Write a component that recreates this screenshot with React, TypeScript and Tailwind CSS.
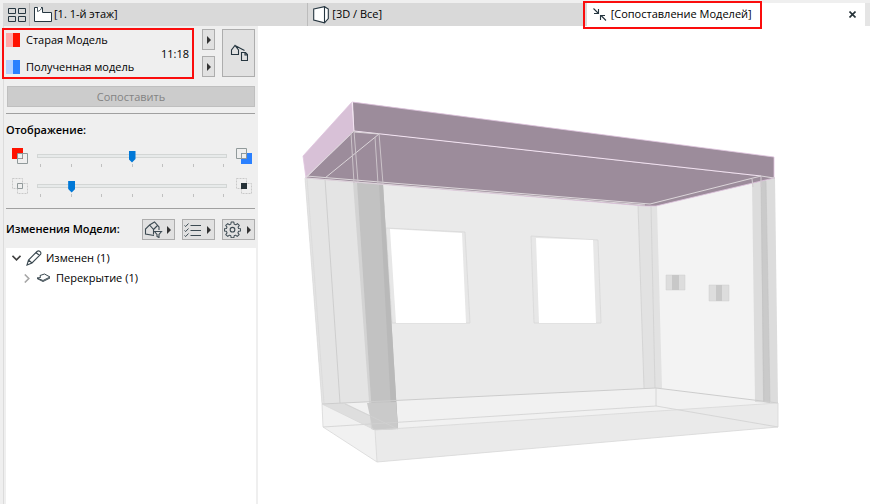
import { useState } from "react";
import type { ReactNode } from "react";

const TICKS = [0, 1, 2, 3, 4, 5, 6];

function GridIcon() {
  return (
    <svg width="18" height="14" viewBox="0 0 18 14" fill="none" stroke="#263640">
      <path d="M.5.5h7v5h-7zM10.5.5h7v5h-7zM.5 8.5h7v5h-7zM10.5 8.5h7v5h-7z" />
    </svg>
  );
}

function PlanIcon() {
  return (
    <svg width="18" height="15" viewBox="0 0 18 15" fill="#fff" stroke="#263640">
      <path d="M.5.5v14h17V5.500h-9V.5z" stroke="none" />
      <path d="M.5.5v14h17V5.500h-9V.5H7M.5.5H3" />
      <path d="M3.500 0v4.500C5.500 4 7.500 2.500 7.500.5" strokeWidth=".8" fill="none" />
    </svg>
  );
}

function CubeIcon() {
  return (
    <svg width="16" height="18" viewBox="0 0 16 18" fill="#fff" stroke="#263640" strokeWidth="1.100">
      <path d="M.7 3 11.500.7l3.800 2.300v9.500l-3.800 4.300L.7 14z" />
      <path d="M11.500.7v16" />
    </svg>
  );
}

function CompareIcon() {
  return (
    <svg width="14" height="14" viewBox="0 0 14 14" fill="none" stroke="#263640" strokeWidth="1.100">
      <path d="M.5.5l5 5M5.500 1v4.500H1M13 12.500l-5-5M7.500 12V7.500H12" />
    </svg>
  );
}

function HousesIcon() {
  return (
    <svg width="18" height="18" viewBox="0 0 18 18" fill="none" stroke="#263640" strokeWidth="1.100">
      <path d="M9 10.500H1.500V6L5 1.500 8.500 6v4.500M5 1.500 14.500 6.500" />
      <path d="M11.500 8.500h4l2 2v6h-6zM15 8.500v2.500h2.500" />
    </svg>
  );
}

function FilterHouseIcon() {
  return (
    <svg width="19" height="17" viewBox="0 0 19 17" fill="none" stroke="#3c4a52" strokeWidth="1.100">
      <path d="M10 14.500 1.500 13V8L5.500 4l4 4.500v5M5.500 4l5-3 4.500 5v3M9.500 8.500l4-4" />
      <path d="M10.500 10.500h7l-2.500 3v3l-2-1v-2z" />
    </svg>
  );
}

function ChecklistIcon() {
  return (
    <svg width="18" height="14" viewBox="0 0 18 14" fill="none" stroke="#3c4a52">
      <path d="M6.500 2.500H17M6.500 7.500H17M6.500 12.500H17M.5 2.500l1.200 1L4.500.5M.5 7.500l1.200 1 2.800-3M.5 12.500l1.200 1 2.800-3" />
    </svg>
  );
}

function GearIcon() {
  return (
    <svg width="17" height="17" viewBox="0 0 24 24" fill="none" stroke="#3c4a52" strokeWidth="1.500" strokeLinejoin="round">
      <path d="M10 1h4l.5 3 2.300 1 2.500-1.800 2.800 2.800L20.300 8.500l.7 2 3 .3v3.400l-3 .5-1 2.300 1.900 2.500-2.900 2.800-2.500-1.900-2 .9-.5 3h-4l-.5-3-2.100-.9L5 22.300 2 19.500 3.900 17 3 14.700l-3-.5v-3.400l3-.3.8-2L2 6l3-2.800L7.400 5l2.100-1z" transform="translate(.6 .6) scale(.95)" />
      <circle cx="12" cy="12.300" r="3.300" />
    </svg>
  );
}

function PencilIcon() {
  return (
    <svg width="16" height="16" viewBox="0 0 16 16" fill="none" stroke="#3c4a52" strokeWidth="1.100">
      <path d="M1 15l1.500-5L11 1.500q1.500-1.200 3 0t.5 3L6 13zM2.500 10l3.500 3M10 2.500l3.500 3" />
    </svg>
  );
}

function SlabIcon() {
  return (
    <svg width="15" height="10" viewBox="0 0 15 10" fill="none" stroke="#3c4a52">
      <path d="M1 5 4.500 4.500 4 2.500 8.500 1 14 4 7 7.500z" />
      <path d="M1 5.500 7 8.500 14 5" />
    </svg>
  );
}

function OldModelIcon() {
  return (
    <svg width="16" height="16" viewBox="0 0 16 16" fill="none">
      <path d="M0 0h11v11H0z" fill="#ff1100" />
      <path d="M6 6h4v4H6z" fill="#efefef" />
      <path d="M5.500 5.500h10v10h-10zM10.500 5.500v5h-5" stroke="#919a9b" />
    </svg>
  );
}

function NewModelIcon() {
  return (
    <svg width="16" height="16" viewBox="0 0 16 16" fill="none">
      <path d="M5 5h11v11H5z" fill="#2a80ff" />
      <path d="M6 6h4v4H6z" fill="#efefef" />
      <path d="M.5.5h10v10H.5zM5.500 10.500v-5h5" stroke="#919a9b" />
    </svg>
  );
}

function OverlapIcon({ solid = false }: { solid?: boolean }) {
  return (
    <svg width="16" height="16" viewBox="0 0 16 16" fill="none">
      <path d="M.5.5h10v10H.5zM5.500 5.500h10v10h-10z" stroke="#c9c9c9" strokeDasharray="2 1" />
      {solid ? <path d="M5 5h6v6H5z" fill="#263238" /> : <path d="M5.500 5.500h5v5h-5z" fill="#efefef" stroke="#919a9b" />}
    </svg>
  );
}

function Arrow() {
  return (
    <svg width="4" height="8" viewBox="0 0 4 8" fill="#333"><path d="M0 0l4 4-4 4z" /></svg>
  );
}

function ToolButton({ label, children }: { label: string; children: ReactNode }) {
  return (
    <button type="button" aria-label={label}
      className="flex h-[21px] w-[33px] items-center justify-between border border-[#adadad] bg-[#e1e1e1] pl-px pr-[3px]">
      {children}
      <Arrow />
    </button>
  );
}

function DisplaySlider({ label, initial, left, right }: { label: string; initial: number; left: ReactNode; right: ReactNode }) {
  const [value, setValue] = useState(initial);
  return (
    <div className="flex h-[30px] items-start pl-1.5 pr-1">
      {left}
      <div className="mx-[9px] flex-1">
        <input type="range" min={0} max={6} value={value} aria-label={label}
          onChange={(e) => setValue(Number(e.target.value))}
          className="block h-[15px] w-full appearance-none bg-transparent [&::-webkit-slider-runnable-track]:h-1 [&::-webkit-slider-runnable-track]:border [&::-webkit-slider-runnable-track]:border-[#d3d6d5] [&::-webkit-slider-runnable-track]:bg-[#e7eaea] [&::-webkit-slider-thumb]:-mt-1 [&::-webkit-slider-thumb]:h-3 [&::-webkit-slider-thumb]:w-[7px] [&::-webkit-slider-thumb]:appearance-none [&::-webkit-slider-thumb]:bg-[#0078d7] [&::-webkit-slider-thumb]:[clip-path:polygon(0_0,100%_0,100%_70%,50%_100%,0_70%)]" />
        <div className="flex justify-between px-[3px] pt-px">
          {TICKS.map((t) => <span key={t} className="h-[3px] w-px bg-[#c0c0c0]" />)}
        </div>
      </div>
      {right}
    </div>
  );
}

function SidePanel() {
  return (
    <aside className="flex w-[255px] shrink-0 flex-col border-l border-[#dcdcdc] bg-[#efefef] px-0.5">
      <div className="flex gap-[7px] pt-[3px] pr-px">
        <div className="relative flex-1">
          <div className="flex h-12 items-center">
            <div className="flex-1 space-y-[7px] pt-px">
              <div className="flex h-5 items-center gap-1.5">
                <span className="h-[14px] w-[14px] border-l-[7px] border-[#ffaaaa] bg-[#ff1100]" />
                Старая Модель
              </div>
              <div className="flex h-5 items-center gap-1.5">
                <span className="h-[14px] w-[14px] border-l-[7px] border-[#b3d1ff] bg-[#2a80ff]" />
                Полученная модель
              </div>
            </div>
            <span className="pr-1.5 pt-0.5">11:18</span>
          </div>
          <div className="pointer-events-none absolute -top-px right-px -bottom-0.5 -left-1 border-2 border-[#fb0d0d]" />
        </div>
        <div className="flex flex-col justify-between">
          <button type="button" aria-label="Старая Модель" className="flex h-[21px] w-[13px] items-center justify-center border border-[#adadad] bg-[#e1e1e1]"><Arrow /></button>
          <button type="button" aria-label="Полученная модель" className="flex h-[21px] w-[13px] items-center justify-center border border-[#adadad] bg-[#e1e1e1]"><Arrow /></button>
        </div>
        <button type="button" aria-label="Модели" className="flex h-12 w-[33px] items-center justify-center border border-[#adadad] bg-[#e1e1e1]"><HousesIcon /></button>
      </div>

      <button type="button" disabled className="mx-px mt-[9px] h-[21px] border border-[#bfbfbf] bg-[#cccccc] pt-px text-[#838383]">Сопоставить</button>

      <div className="mt-1.5 mr-px border-t border-[#a0a0a0]" />
      <h2 className="mt-2 h-4 leading-4 font-semibold">Отображение:</h2>

      <div className="mt-[10px]">
        <DisplaySlider label="Старая и полученная модели" initial={3} left={<OldModelIcon />} right={<NewModelIcon />} />
        <DisplaySlider label="Общие элементы" initial={1} left={<OverlapIcon />} right={<OverlapIcon solid />} />
      </div>

      <div className="mr-px border-t border-[#a0a0a0]" />
      <div className="mt-[10px] mr-px flex h-[21px] items-center gap-[7px]">
        <h2 className="flex-1 font-semibold whitespace-nowrap">Изменения Модели:</h2>
        <ToolButton label="Фильтр"><FilterHouseIcon /></ToolButton>
        <ToolButton label="Список"><ChecklistIcon /></ToolButton>
        <ToolButton label="Настройки"><GearIcon /></ToolButton>
      </div>

      <ul className="mt-2 flex-1 bg-white leading-5">
        <li>
          <div className="flex h-5 items-center pl-1.5">
            <svg width="9" height="6" viewBox="0 0 9 6" fill="none" stroke="#404040" strokeWidth="1.600"><path d="M.5.800l4 4 4-4" /></svg>
            <span className="mr-1 ml-[5px]"><PencilIcon /></span>
            Изменен (1)
          </div>
          <ul>
            <li className="flex h-5 items-center pl-[18px]">
              <svg width="6" height="9" viewBox="0 0 6 9" fill="none" stroke="#a6a6a6" strokeWidth="1.600"><path d="M.800.5l4 4-4 4" /></svg>
              <span className="mr-[5px] ml-1.5"><SlabIcon /></span>
              Перекрытие (1)
            </li>
          </ul>
        </li>
      </ul>
    </aside>
  );
}

function ModelView() {
  return (
    <svg className="h-full w-full" viewBox="258 26 612 478" preserveAspectRatio="xMinYMin meet" role="img" aria-label="3D">
      {/* back and side walls */}
      <path d="M305 177 656 205 658 389 322 404z" fill="#eaeaea" />
      <path d="M305 177 354 181 373 430 322 404z" fill="#e4e4e4" />
      <path d="M656 205 760 181 768 403 656 388z" fill="#f3f3f3" />
      {/* windows */}
      <g stroke="#d8d8d8" strokeWidth=".8">
        <path d="M386 228 465 232 470 323 392 323z" fill="#e7e7e7" />
        <path d="M531 236 598 240 601 323 534 323z" fill="#e7e7e7" />
      </g>
      <path d="M390 229 462 233 466 323 396 323z" fill="#fff" />
      <path d="M536 238 593 240 596 323 539 323z" fill="#fff" />
      {/* base */}
      <path d="M322 404 656 388 778 403 778 427 377 462 323 427z" fill="#f1f1f1" />
      <path d="M322 404 345 403 398 429 375 430z" fill="#dedede" />
      <path d="M375 430 778 403 778 427 377 462z" fill="#eaeaea" />
      {/* columns */}
      <path d="M638 205 657 205 662 388 644 388z" fill="#e2e2e2" />
      <path d="M651 205 655 388M638 205l6 183" stroke="#d0d0d0" strokeWidth=".8" fill="none" />
      <path d="M752 180 775 177 778 403 755 402z" fill="#dcdcdc" />
      <path d="M761 181 766 181 770 403 763 402z" fill="#cacaca" />
      <path d="M761 181l3 221M766 181l4 221" stroke="#c2c2c2" strokeWidth=".6" />
      <path d="M353 182 358 182 375 430 371 429z" fill="#d3d3d3" />
      <path d="M357 182 383 184 398 429 373 430z" fill="#c2c2c2" />
      <path d="M379 184 383 184 398 429 392 429z" fill="#b9b9b9" />
      <path d="M367 403 396 402 398 429 373 430z" fill="#cacaca" />
      <path d="M305 178l17 226M307 178l17 225" stroke="#d8d8d8" strokeWidth=".7" />
      <path d="M325 179l15 224" stroke="#cecece" />
      {/* base edges, seen through the columns */}
      <path d="M322 404 656 388 778 403" fill="none" stroke="#cccccc" />
      <path d="M323 427 656 406 778 427M656 388v18M345 404l53 25" fill="none" stroke="#d0d0d0" strokeWidth=".8" />
      <path d="M322 404 375 430 778 403v24L377 462l-54-35zM375 430l2 32" fill="none" stroke="#d8d8d8" strokeWidth=".8" />
      {/* sockets */}
      <path d="M666 275h19v15h-19z" fill="#dddddd" stroke="#cfcfcf" strokeWidth=".5" />
      <path d="M672 275h7v15h-7z" fill="#c8c8c8" />
      <path d="M709 285h20v16h-20z" fill="#dddddd" stroke="#cfcfcf" strokeWidth=".5" />
      <path d="M716 285h6v16h-6z" fill="#c8c8c8" />
      {/* roof slab */}
      <path d="M354 131 775 178 656 206 645 206 306 178z" fill="#9c8c9b" />
      <path d="M353 102 774 157 774 178 354 131z" fill="#9c8c9b" />
      <path d="M303 156 352 102 354 131 306 178z" fill="#d8c1d7" />
      <path d="M303 156 352 102 774 157v21L656 206 645 206 306 178z" fill="none" stroke="#dfc4de" strokeWidth=".8" />
      <path d="M352 102l2 29 407 45" fill="none" stroke="#f3e3f2" />
      <path d="M306 177 354 131M306 176l344 28 111-28 13 2M325 178l54-44-25-2M306 178l339 27" fill="none" stroke="#dcd6da" />
      <path d="M351 133l3 50M354 131l4 51M375 137l3 47M379 133l4 51" fill="none" stroke="#cbc3c9" />
      <path d="M752 179l1 8M761 177v10" stroke="#d3ccd1" />
    </svg>
  );
}

export default function App() {
  return (
    <div className="flex min-h-screen flex-col bg-[#efefef] pt-[3px] font-['Open_Sans','Noto_Sans',sans-serif] text-[11px] text-black">
      <nav className="ml-[3px] flex h-[23px] bg-[#d9d9d9]">
        <button type="button" aria-label="Вкладки" className="flex w-[27px] items-center justify-center border-r border-[#bcbcbc] pr-0.5 pl-1"><GridIcon /></button>
        <div className="grid flex-1 grid-cols-3">
          <button type="button" className="flex items-center gap-0.5 border-r border-[#bcbcbc] pl-1"><PlanIcon />[1. 1-й этаж]</button>
          <button type="button" className="flex items-center gap-[3px] pl-[5px]"><CubeIcon />[3D / Все]</button>
          <div className="relative flex items-center bg-white pr-[7px] pl-1.5">
            <button type="button" className="flex flex-1 items-center gap-1"><CompareIcon />[Сопоставление Моделей]</button>
            <button type="button" aria-label="Закрыть" className="flex h-4 w-3 items-center justify-center">
              <svg width="7" height="7" viewBox="0 0 7 7" stroke="#263238" strokeWidth="1.600"><path d="M.5.5l6 6M6.500.5l-6 6" /></svg>
            </button>
            <div className="pointer-events-none absolute -top-0.5 -left-1 h-7 w-[179px] border-2 border-[#fb0d0d]" />
          </div>
        </div>
        <span className="w-[5px] bg-[#e5e5e5]" />
      </nav>
      <div className="flex flex-1 pl-[3px]">
        <SidePanel />
        <main className="min-w-0 flex-1 bg-white"><ModelView /></main>
      </div>
    </div>
  );
}
